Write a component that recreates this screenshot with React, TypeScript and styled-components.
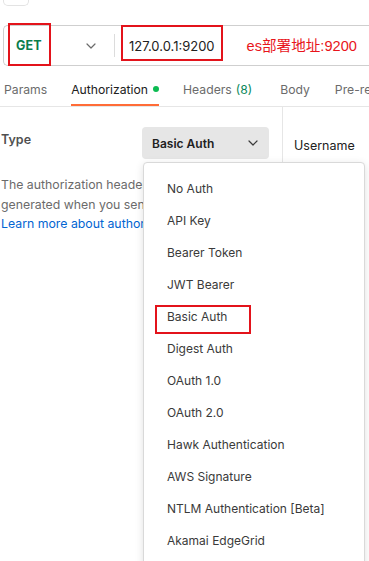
import React from "react";
import styled, { createGlobalStyle } from "styled-components";

const GlobalStyle = createGlobalStyle`
  html, body {
    margin: 0;
    padding: 0;
    background: #ffffff;
  }
  body {
    width: 369px;
    height: 561px;
    overflow: hidden;
    font-family: Inter, "Noto Sans", sans-serif;
  }
`;

const Page = styled.div`
  position: relative;
  width: 369px;
  height: 561px;
  overflow: hidden;
  background: #ffffff;
`;

const TopStub = styled.div`
  box-sizing: border-box;
  margin-left: 3px;
  width: 26px;
  height: 6px;
  border: 1px solid #e3e3e3;
  border-top: none;
  border-radius: 0 0 5px 5px;
`;

const UrlBar = styled.div`
  position: relative;
  box-sizing: border-box;
  display: flex;
  align-items: center;
  margin: 19px 0 0 3px;
  height: 41px;
  border: 1px solid #cfcfcf;
  border-right: none;
  border-radius: 5px 0 0 5px;
  white-space: nowrap;
`;

const MethodSelect = styled.div`
  display: flex;
  align-items: center;
  justify-content: space-between;
  box-sizing: border-box;
  flex-shrink: 0;
  width: 110px;
  padding: 0 18px 0 12px;
  height: 100%;
`;

const MethodText = styled.span`
  font-size: 12.5px;
  font-weight: 700;
  color: #0b7d4c;
  letter-spacing: 0.2px;
`;

const Divider = styled.div`
  flex-shrink: 0;
  width: 1px;
  height: 23px;
  background: #dcdcdc;
`;

const UrlText = styled.span`
  margin-left: 14px;
  font-size: 13px;
  color: #212121;
  flex-shrink: 0;
`;

const Note = styled.span`
  margin: 0 0 2px 32px;
  flex-shrink: 0;
  font-family: "Liberation Sans", "Noto Sans CJK SC", sans-serif;
  font-size: 14.6px;
  color: #e8141b;
`;

const Annotation = styled.div<{ $l: number; $t: number; $w: number; $h: number }>`
  position: absolute;
  left: ${(p) => p.$l}px;
  top: ${(p) => p.$t}px;
  width: ${(p) => p.$w}px;
  height: ${(p) => p.$h}px;
  box-sizing: border-box;
  border: 2px solid #e3131b;
  pointer-events: none;
`;

const Tabs = styled.div`
  display: flex;
  align-items: stretch;
  height: 40px;
  border-bottom: 1px solid #e6e6e6;
  white-space: nowrap;
`;

const Tab = styled.div<{ $active?: boolean; $ml: number }>`
  display: flex;
  align-items: center;
  flex-shrink: 0;
  margin-left: ${(p) => p.$ml}px;
  padding-top: 8px;
  font-size: 12.2px;
  color: ${(p) => (p.$active ? "#212121" : "#6b6b6b")};
  border-bottom: 2px solid ${(p) => (p.$active ? "#ff6c37" : "transparent")};
`;

const Dot = styled.span`
  width: 6px;
  height: 6px;
  margin-left: 5px;
  border-radius: 50%;
  background: #0cbb52;
`;

const Count = styled.span`
  margin-left: 4px;
  color: #0c8a5c;
`;

const Body = styled.div`
  display: flex;
  height: 460px;
`;

const LeftPane = styled.div`
  box-sizing: border-box;
  width: 283px;
  padding: 20px 13px 0 1px;
  border-right: 1px solid #e6e6e6;
`;

const TypeRow = styled.div`
  display: flex;
  justify-content: space-between;
  align-items: flex-start;
`;

const TypeLabel = styled.span`
  margin-top: 5px;
  font-size: 12.5px;
  font-weight: 600;
  color: #505050;
`;

const SelectButton = styled.div`
  display: flex;
  align-items: center;
  justify-content: space-between;
  box-sizing: border-box;
  width: 127px;
  height: 32px;
  padding: 0 11px 0 10px;
  border-radius: 4px;
  background: #e6e6e6;
  font-size: 12px;
  font-weight: 600;
  color: #212121;
`;

const Description = styled.p`
  margin: 16px 0 0;
  font-size: 12.3px;
  line-height: 19.5px;
  color: #6b6b6b;
  white-space: nowrap;
`;

const LearnLink = styled.span`
  color: #0265d2;
`;

const RightPane = styled.div`
  padding: 31px 0 0 11px;
  font-size: 12.5px;
  color: #212121;
`;

const Menu = styled.div`
  position: absolute;
  left: 143px;
  top: 162px;
  width: 222px;
  height: 420px;
  box-sizing: border-box;
  padding-top: 9px;
  background: #ffffff;
  border: 1px solid #d9d9d9;
  border-radius: 4px;
  box-shadow: 0 2px 8px rgba(0, 0, 0, 0.12);
`;

const MenuItem = styled.div`
  position: relative;
  display: flex;
  align-items: center;
  height: 32px;
  padding-left: 23px;
  font-size: 12px;
  color: #3a3a3a;
`;

const Chevron: React.FC<{ color?: string }> = ({ color = "#6b6b6b" }) => (
  <svg width="10" height="6" viewBox="0 0 10 6" fill="none">
    <path d="M1 1l4 4 4-4" stroke={color} strokeWidth="1.2" strokeLinecap="round" strokeLinejoin="round" />
  </svg>
);

const authTypes = [
  "No Auth",
  "API Key",
  "Bearer Token",
  "JWT Bearer",
  "Basic Auth",
  "Digest Auth",
  "OAuth 1.0",
  "OAuth 2.0",
  "Hawk Authentication",
  "AWS Signature",
  "NTLM Authentication [Beta]",
  "Akamai EdgeGrid",
];

export default function App() {
  return (
    <Page>
      <GlobalStyle />
      <TopStub />
      <UrlBar>
        <MethodSelect>
          <MethodText>GET</MethodText>
          <Chevron />
        </MethodSelect>
        <Divider />
        <UrlText>127.0.0.1:9200</UrlText>
        <Note>es部署地址:9200</Note>
        <Annotation $l={4} $t={-3} $w={43} $h={43} />
        <Annotation $l={117} $t={-1} $w={102} $h={36} />
      </UrlBar>
      <Tabs>
        <Tab $ml={4}>Params</Tab>
        <Tab $ml={24} $active>
          Authorization
          <Dot />
        </Tab>
        <Tab $ml={24}>
          Headers<Count>(8)</Count>
        </Tab>
        <Tab $ml={28}>Body</Tab>
        <Tab $ml={25}>Pre-request Script</Tab>
      </Tabs>
      <Body>
        <LeftPane>
          <TypeRow>
            <TypeLabel>Type</TypeLabel>
            <SelectButton>
              Basic Auth
              <Chevron color="#3a3a3a" />
            </SelectButton>
          </TypeRow>
          <Description>
            The authorization header will be automatically
            <br />
            generated when you send the request.
            <br />
            <LearnLink>Learn more about authorization</LearnLink>
          </Description>
        </LeftPane>
        <RightPane>Username</RightPane>
      </Body>
      <Menu>
        {authTypes.map((t) => (
          <MenuItem key={t}>
            {t}
            {t === "Basic Auth" && <Annotation $l={11} $t={5} $w={96} $h={29} />}
          </MenuItem>
        ))}
      </Menu>
    </Page>
  );
}
